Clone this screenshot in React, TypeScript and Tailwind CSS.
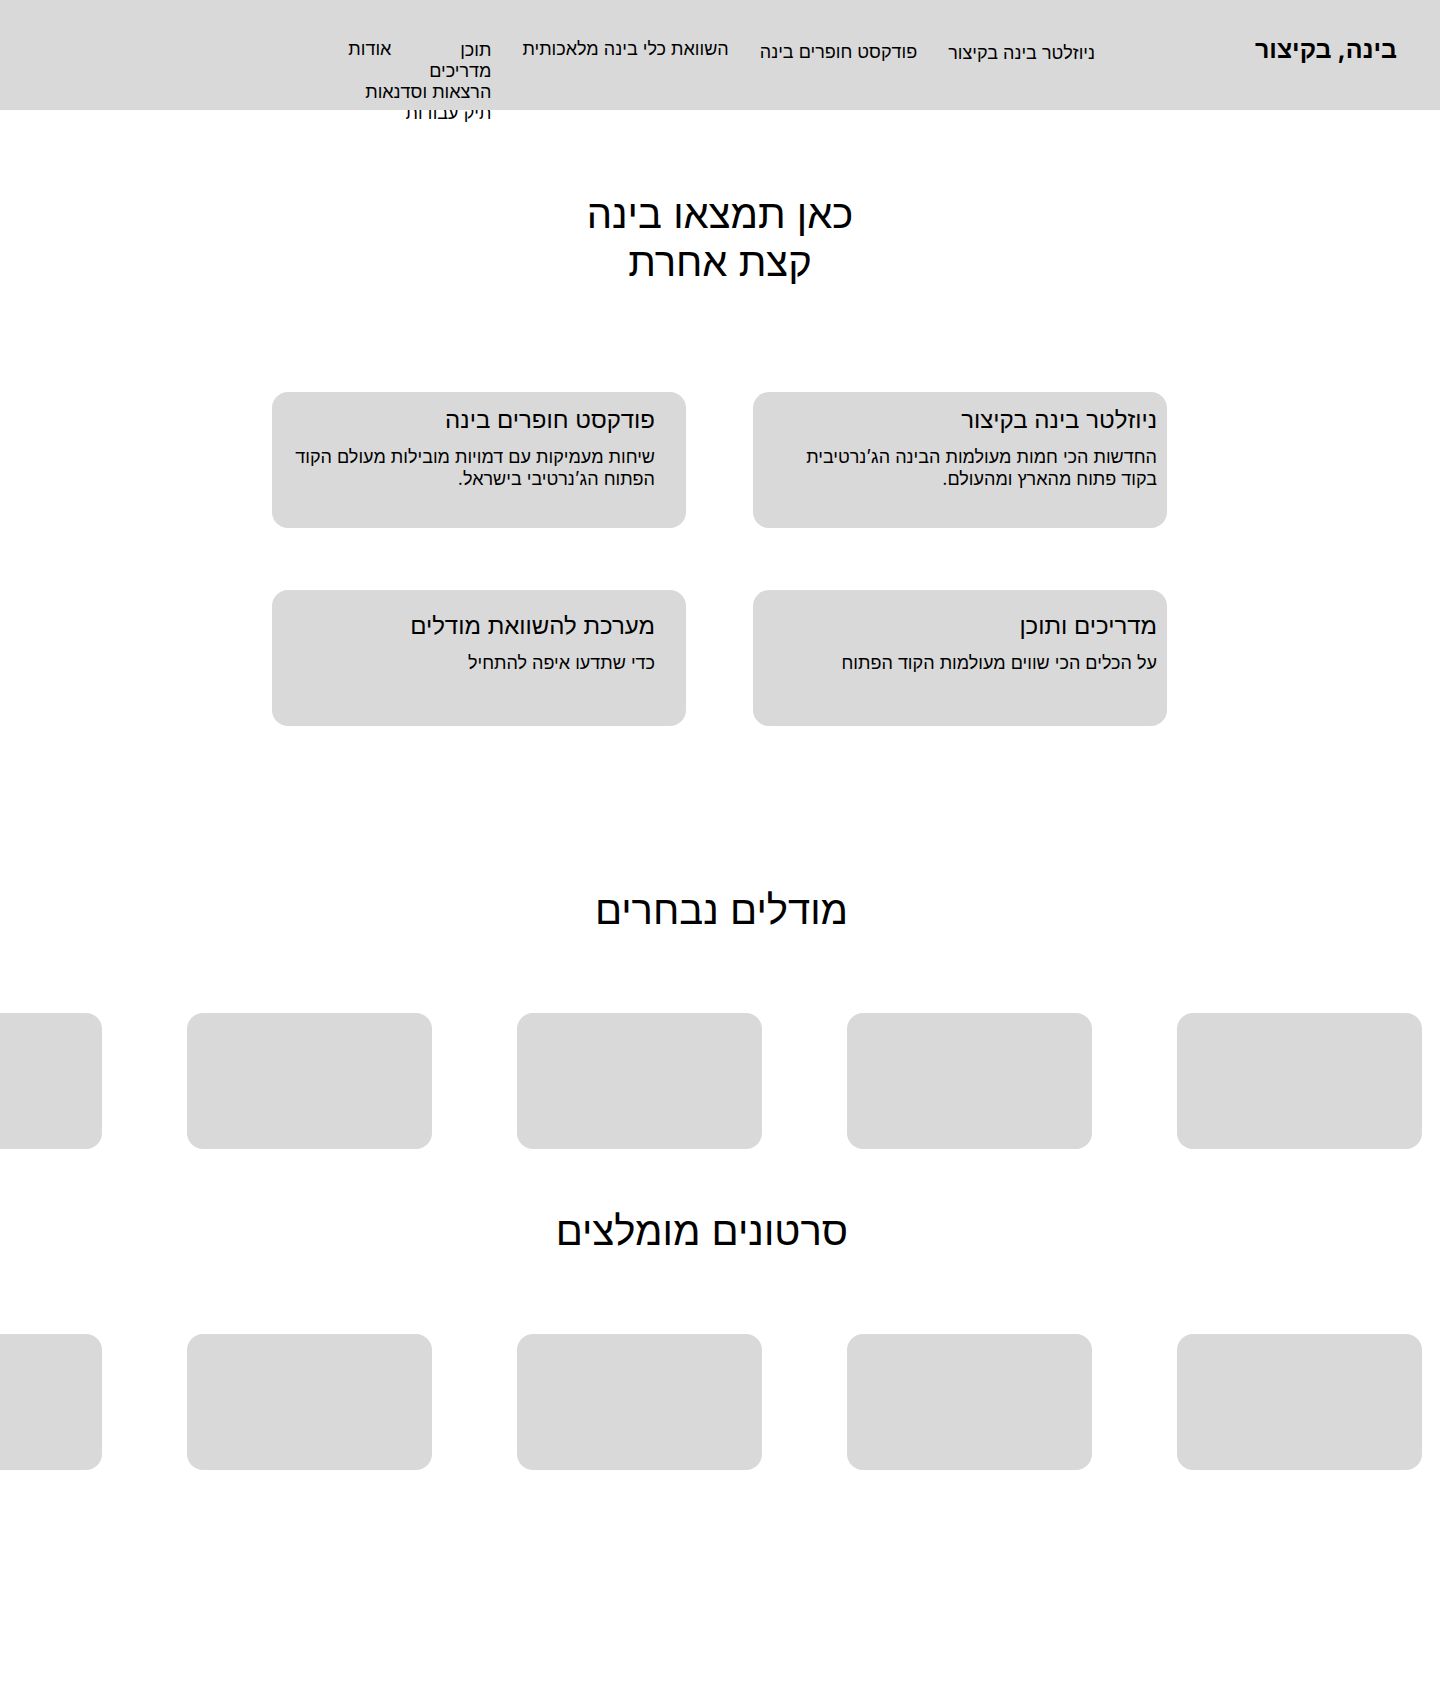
const features = [
  { title: 'ניוזלטר בינה בקיצור', text: 'החדשות הכי חמות מעולמות הבינה הג’נרטיבית בקוד פתוח מהארץ ומהעולם.' },
  { title: 'פודקסט חופרים בינה', text: 'שיחות מעמיקות עם דמויות מובילות מעולם הקוד הפתוח הג’נרטיבי בישראל.' },
  { title: 'מדריכים ותוכן', text: 'על הכלים הכי שווים מעולמות הקוד הפתוח' },
  { title: 'מערכת להשוואת מודלים', text: 'כדי שתדעו איפה להתחיל' },
];

function Carousel({ title }: { title: string }) {
  return (
    <section className="w-full">
      <h2 className="mx-auto w-[256px] text-[40px] leading-[48px] whitespace-nowrap">{title}</h2>
      <div className="mt-[79px] flex gap-[85px] overflow-hidden ps-[18px]">
        {[1, 2, 3, 4, 5].map((n) => (
          <div key={n} className="h-[136px] w-[245px] shrink-0 rounded-2xl bg-[#d9d9d9]" />
        ))}
      </div>
    </section>
  );
}

export default function App() {
  return (
    <div dir="rtl" className="min-h-screen bg-white pb-[224px] font-['Inter','Liberation_Sans',sans-serif] text-black">
      <header className="flex h-[110px] items-start bg-[#d9d9d9] ps-[43px] text-lg leading-[21px]">
        <a href="#" className="mt-[35px] w-[302px] text-[25px] leading-[29px] font-bold">בינה, בקיצור</a>
        <nav className="flex items-start gap-[31px] pt-[38px] whitespace-nowrap">
          <a href="#newsletter" className="pt-1">ניוזלטר בינה בקיצור</a>
          <a href="#podcast" className="pt-[3px]">פודקסט חופרים בינה</a>
          <a href="#compare">השוואת כלי בינה מלאכותית</a>
          <div className="flex w-[69px] flex-col pt-px">
            <a href="#content">תוכן</a>
            <a href="#guides">מדריכים</a>
            <a href="#talks">הרצאות וסדנאות</a>
            <a href="#work" className="[clip-path:inset(8px_-100px_-8px_-100px)]">תיק עבודות</a>
          </div>
          <a href="#about">אודות</a>
        </nav>
      </header>
      <main>
        <h1 className="mx-auto mt-[80px] w-[300px] text-center text-[40px] leading-[48px]">כאן תמצאו בינה קצת אחרת</h1>
        <section className="mx-auto mt-[106px] grid w-[896px] max-w-full grid-cols-2 gap-x-[67px] gap-y-[62px] ps-px">
          {features.map((f, i) => (
            <article key={f.title} className={`h-[136px] rounded-2xl bg-[#d9d9d9] ${i > 1 ? 'pt-[21px]' : 'pt-[13px]'} ${i % 2 ? 'ps-[31px]' : 'ps-[10px]'}`}>
              <h2 className="text-2xl leading-[29px]">{f.title}</h2>
              <p className="mt-3 w-[368px] text-lg leading-[22px]">{f.text}</p>
            </article>
          ))}
        </section>
        <div className="mt-[160px] flex flex-col gap-[58px]">
          <Carousel title="מודלים נבחרים" />
          <Carousel title="סרטונים מומלצים" />
        </div>
      </main>
    </div>
  );
}
